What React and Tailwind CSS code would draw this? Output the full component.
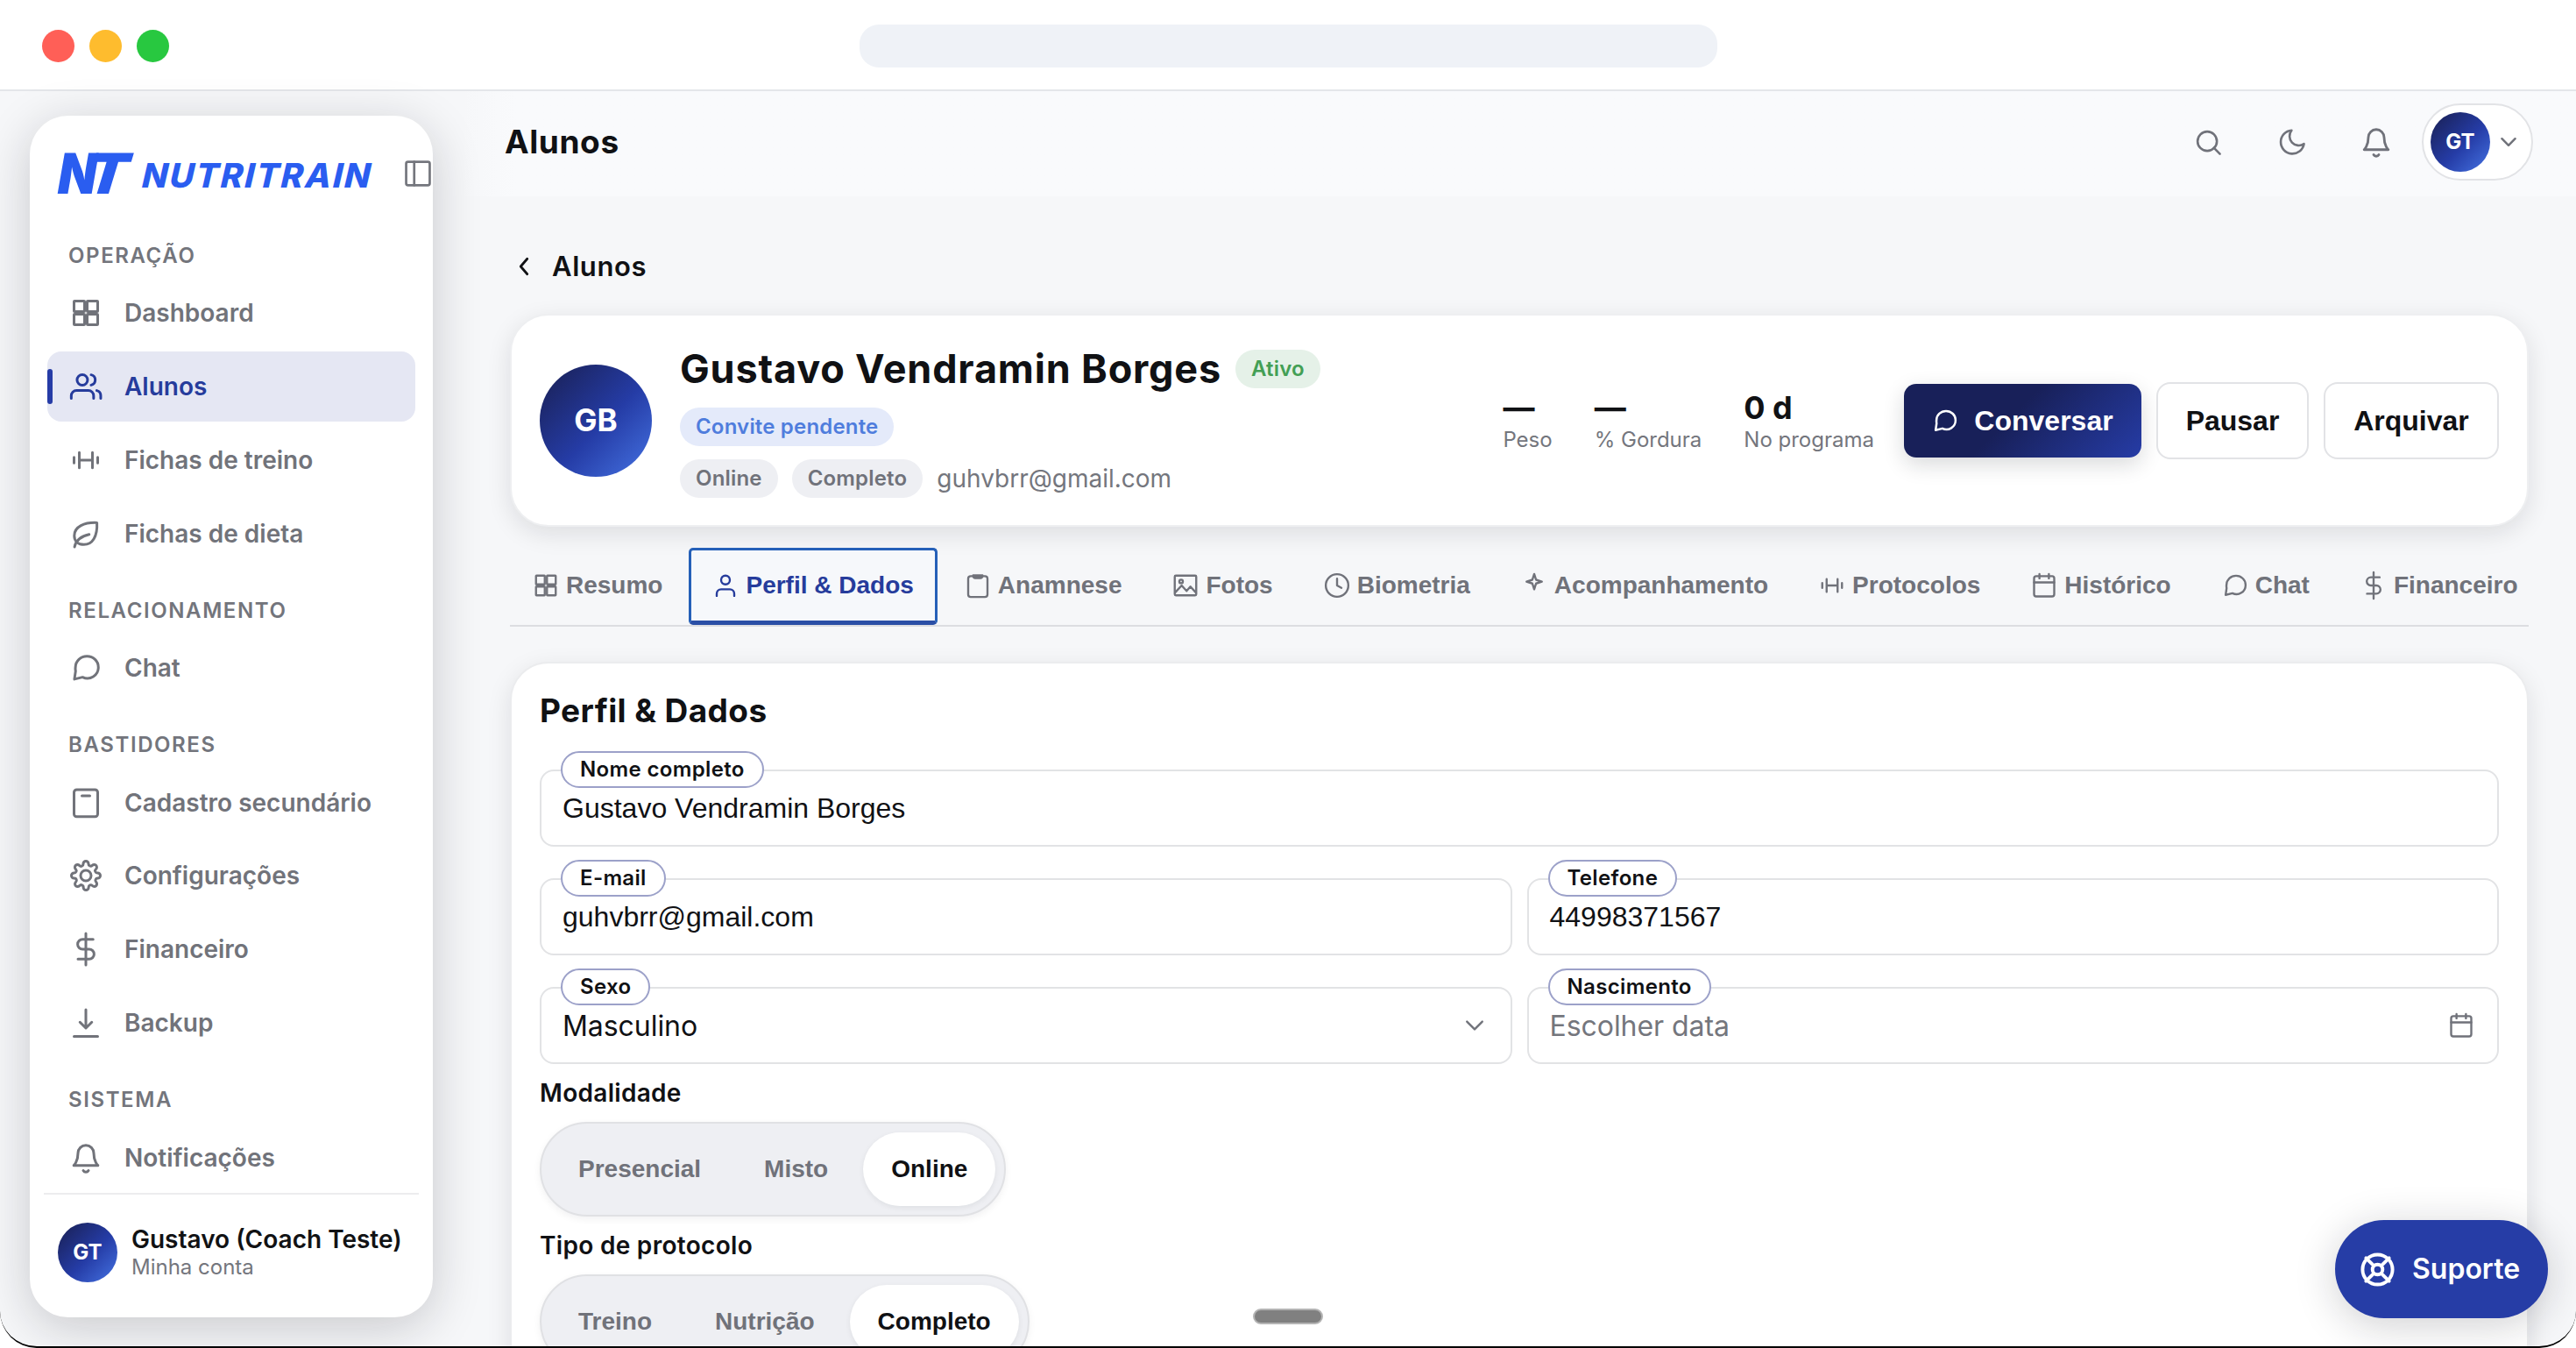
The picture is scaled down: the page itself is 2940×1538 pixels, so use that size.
import { clsx } from 'clsx'

const ICONS = {
  grid: (
    <>
      <rect x="3" y="3" width="8" height="8" rx=".4" />
      <rect x="13" y="3" width="8" height="8" rx=".4" />
      <rect x="3" y="13" width="8" height="8" rx=".4" />
      <rect x="13" y="13" width="8" height="8" rx=".4" />
    </>
  ),
  users: (
    <>
      <circle cx="9.3" cy="7" r="4" />
      <path d="M.9 21v-2a4 4 0 0 1 4-4h9a4 4 0 0 1 4 4v2M16 3.1a4 4 0 0 1 0 7.8M23.3 21v-2a4 4 0 0 0-3-3.9" />
    </>
  ),
  user: (
    <>
      <circle cx="12" cy="7" r="4" />
      <path d="M20 21.5v-2a4 4 0 0 0-4-4H8a4 4 0 0 0-4 4v2" />
    </>
  ),
  dumbbell: <path d="M3 9.8v4.4M7 6.2v11.6M17 6.2v11.6M21 9.8v4.4M7 12h10" />,
  leaf: (
    <>
      <path d="M20.4 3.6C11 3.2 3.2 6.5 3.2 13.5c0 4.5 3.3 6.7 7.3 6.7 6.5 0 10.5-6.2 9.9-16.6z" />
      <path d="M3.4 22c.8-4.5 4.6-8 11.1-9.5" />
    </>
  ),
  chat: <path d="M21.5 11.5a8.3 8.3 0 0 1-12 7.6L3.3 20.6l.9-6.2a8.7 8.7 0 0 1-.1-3A8.7 8.3 0 0 1 21.5 11.5z" />,
  tray: (
    <>
      <rect x="3" y="2" width="18" height="20.5" rx="2" />
      <path d="M9 6.6h6" />
    </>
  ),
  gear: (
    <>
      <circle cx="12" cy="12" r="4" />
      <path d="M19.4 15a1.65 1.65 0 0 0 .33 1.82l.06.06a2 2 0 1 1-2.83 2.83l-.06-.06a1.65 1.65 0 0 0-2.8 1.17V21a2 2 0 0 1-4 0v-.09A1.65 1.65 0 0 0 7.18 19.73l-.06.06a2 2 0 1 1-2.83-2.83l.06-.06A1.65 1.65 0 0 0 3.18 14H3a2 2 0 0 1 0-4h.09A1.65 1.65 0 0 0 4.27 7.18l-.06-.06a2 2 0 1 1 2.83-2.83l.06.06A1.65 1.65 0 0 0 10 3.18V3a2 2 0 0 1 4 0v.09a1.65 1.65 0 0 0 2.82 1.18l.06-.06a2 2 0 1 1 2.83 2.83l-.06.06A1.65 1.65 0 0 0 20.82 10H21a2 2 0 0 1 0 4h-.09a1.65 1.65 0 0 0-1.51 1z" />
    </>
  ),
  dollar: <path d="M12 0v24M17.5 4.5H9.5a3.75 3.75 0 0 0 0 7.5h5a3.75 3.75 0 0 1 0 7.5H6" />,
  download: <path d="M12 2v13.5M7.5 11.5l4.5 4.5 4.5-4.5M3 22.3h18" />,
  bell: (
    <>
      <path d="M6 8.5a6 6 0 0 1 12 0c0 6.5 3.2 9.3 3.2 9.3H2.8S6 15 6 8.5" />
      <path d="M10 21.7a2.3 2.3 0 0 0 4 0" />
    </>
  ),
  search: (
    <>
      <circle cx="11" cy="11" r="8" />
      <path d="M21.5 21.5l-5-5" />
    </>
  ),
  moon: <path d="M21.5 13.2A9.7 9.7 0 1 1 11.2 2a7.7 7.7 0 0 0 10.3 11.2z" />,
  chevronDown: <path d="M5 8.5l7 7 7-7" />,
  chevronLeft: <path d="M15 5l-6 7 6 7" />,
  panel: (
    <>
      <rect x="2.5" y="2.5" width="19" height="19" rx="1.5" />
      <path d="M9 2.5v19" />
    </>
  ),
  clipboard: (
    <>
      <path d="M16 3.5h2.5a2.3 2.3 0 0 1 2.3 2.3v14.4a2.3 2.3 0 0 1-2.3 2.3h-13a2.3 2.3 0 0 1-2.3-2.3V5.8a2.3 2.3 0 0 1 2.3-2.3H8" />
      <path d="M7.5 2.3h9v1.2a2 2 0 0 1-2 2h-5a2 2 0 0 1-2-2z" fill="currentColor" strokeWidth="1.2" />
    </>
  ),
  image: (
    <>
      <rect x="2.2" y="3" width="19.6" height="18" rx="1" />
      <circle cx="8" cy="8.3" r="1.6" />
      <path d="M2.5 18.5l6-6.5 4.5 5 3.5-4 5 5.5" />
    </>
  ),
  clock: (
    <>
      <circle cx="12" cy="12" r="10.3" />
      <path d="M12 5.8V12l4 2.2" />
    </>
  ),
  spark: <path d="M12 1.5l1.7 5.3L19 8.5l-5.3 1.7L12 15.5l-1.7-5.3L5 8.5l5.3-1.7z" />,
  calendar: (
    <>
      <rect x="2.8" y="3.5" width="18.4" height="18.5" rx="2" />
      <path d="M2.8 9.2h18.4M7.7 1.5v4M16.3 1.5v4" />
    </>
  ),
  buoy: (
    <>
      <circle cx="12" cy="12" r="10" />
      <circle cx="12" cy="12" r="3.4" />
      <path d="M4.3 4.3l5.2 5.2M19.7 4.3l-5.2 5.2M4.3 19.7l5.2-5.2M19.7 19.7l-5.2-5.2" />
    </>
  ),
}

function Icon({ name, className, stroke = 2 }) {
  return (
    <svg
      viewBox="0 0 24 24"
      fill="none"
      stroke="currentColor"
      strokeWidth={stroke}
      strokeLinecap="round"
      strokeLinejoin="round"
      className={clsx('shrink-0 overflow-visible', className)}
    >
      {ICONS[name]}
    </svg>
  )
}

const NAV = [
  {
    title: 'OPERAÇÃO',
    items: [
      { icon: 'grid', label: 'Dashboard' },
      { icon: 'users', label: 'Alunos', active: true },
      { icon: 'dumbbell', label: 'Fichas de treino' },
      { icon: 'leaf', label: 'Fichas de dieta' },
    ],
  },
  { title: 'RELACIONAMENTO', items: [{ icon: 'chat', label: 'Chat' }] },
  {
    title: 'BASTIDORES',
    items: [
      { icon: 'tray', label: 'Cadastro secundário' },
      { icon: 'gear', label: 'Configurações' },
      { icon: 'dollar', label: 'Financeiro' },
      { icon: 'download', label: 'Backup' },
    ],
  },
  { title: 'SISTEMA', items: [{ icon: 'bell', label: 'Notificações' }] },
]

const TABS = [
  { icon: 'grid', label: 'Resumo' },
  { icon: 'user', label: 'Perfil & Dados', active: true },
  { icon: 'clipboard', label: 'Anamnese' },
  { icon: 'image', label: 'Fotos' },
  { icon: 'clock', label: 'Biometria' },
  { icon: 'spark', label: 'Acompanhamento' },
  { icon: 'dumbbell', label: 'Protocolos' },
  { icon: 'calendar', label: 'Histórico' },
  { icon: 'chat', label: 'Chat' },
  { icon: 'dollar', label: 'Financeiro' },
]

const STATS = [
  { value: '—', label: 'Peso' },
  { value: '—', label: '% Gordura' },
  { value: '0 d', label: 'No programa' },
]

function Avatar({ initials, className }) {
  return (
    <div
      className={clsx(
        'flex shrink-0 items-center justify-center rounded-full bg-[linear-gradient(135deg,#1a2158_5%,#253ca6_55%,#4573e3_100%)] font-bold text-white',
        className,
      )}
    >
      {initials}
    </div>
  )
}

function Logo() {
  return (
    <div className="flex h-[44px] items-end text-[#2a5df0]">
      <div className="flex w-[92px] translate-y-[4px] items-end">
        <span className="-ml-[4px] origin-bottom-left -skew-x-[11deg] scale-x-[0.9] text-[64px] leading-[46px] font-black">N</span>
        <span className="-ml-[18px] origin-bottom-left -skew-x-[16deg] scale-x-[1.06] text-[64px] leading-[46px] font-black">T</span>
      </div>
      <span className="origin-bottom-left -skew-x-[13deg] text-[38.5px] leading-[34px] font-extrabold tracking-[2.1px]">
        NUTRITRAIN
      </span>
    </div>
  )
}

function Sidebar() {
  return (
    <aside className="mt-[28px] ml-[34px] flex h-[1371px] w-[460px] shrink-0 flex-col rounded-[44px] bg-white shadow-[0_12px_56px_rgba(20,22,30,0.2)]">
      <div className="flex h-[112px] items-start pt-[41px] pl-[33px]">
        <div className="w-[395px]">
          <Logo />
        </div>
        <Icon name="panel" className="mt-[8px] -ml-[2px] h-[34px] w-[34px] text-[#74767d]" stroke={1.9} />
      </div>

      <nav className="flex flex-col px-5">
        {NAV.map((group) => (
          <div key={group.title}>
            <div className="h-[73.5px] pt-[29px] pl-[24px] text-[24px] leading-[38px] font-semibold tracking-[1.6px] text-[#73757c]">
              {group.title}
            </div>
            <div className="flex flex-col gap-1">
              {group.items.map((item) => (
                <a
                  key={item.label}
                  className={clsx(
                    'relative flex h-[79.9px] items-center gap-[26px] rounded-2xl pl-[26px] text-[28px] font-semibold whitespace-nowrap',
                    item.active ? 'bg-[#e5e7f3] text-[#263c9c]' : 'text-[#71737a]',
                  )}
                >
                  {item.active && <span className="absolute top-5 left-0 h-10 w-[6px] rounded-full bg-[#263ca6]" />}
                  <Icon name={item.icon} className="h-9 w-9" />
                  {item.label}
                </a>
              ))}
            </div>
          </div>
        ))}
      </nav>

      <div className="mx-4 mt-auto flex h-[143px] items-start gap-[16px] border-t-2 border-[#ececee] pt-[32px] pl-4">
        <Avatar initials="GT" className="h-[68px] w-[68px] text-[24px]" />
        <div className="whitespace-nowrap">
          <div className="mt-[2px] text-[28px] leading-[34px] font-semibold text-[#111214]">Gustavo (Coach Teste)</div>
          <div className="text-[24px] leading-[29px] text-[#74767d]">Minha conta</div>
        </div>
      </div>
    </aside>
  )
}

function TopBar() {
  return (
    <header className="flex h-[120px] shrink-0 items-center bg-linear-to-r from-[#f9fafc]/0 to-[#f9fafc] to-[60px] pr-[49px] pb-1 pl-[48px]">
      <h1 className="text-[37px] font-bold tracking-[0.6px]">Alunos</h1>
      <div className="ml-auto flex items-center text-[#70727a]">
        <div className="mr-3 flex gap-4">
          {['search', 'moon', 'bell'].map((name) => (
            <button key={name} className="flex h-20 w-20 items-center justify-center">
              <Icon name={name} className={name === 'bell' ? 'h-9 w-9' : 'h-[33px] w-[33px]'} stroke={1.9} />
            </button>
          ))}
        </div>
        <button className="flex h-[88px] w-[127px] items-center gap-[8px] rounded-full border-2 border-[#e2e3e6] bg-white pl-2">
          <Avatar initials="GT" className="h-[68px] w-[68px] text-[24px]" />
          <Icon name="chevronDown" className="h-[26px] w-[26px]" stroke={2.3} />
        </button>
      </div>
    </header>
  )
}

function Badge({ children, className }) {
  return (
    <span
      className={clsx(
        'flex h-[44px] items-center rounded-full px-[18px] text-[24px] font-semibold tracking-[0.18px] whitespace-nowrap',
        className,
      )}
    >
      {children}
    </span>
  )
}

function StudentCard() {
  return (
    <section className="flex h-[243px] items-center rounded-[44px] border-2 border-[#eeeff1] bg-white px-8 shadow-[0_8px_28px_rgba(20,22,30,0.11)]">
      <Avatar initials="GB" className="h-[128px] w-[128px] text-[35px]" />
      <div className="ml-[32px] flex flex-col pt-[3px]">
        <div className="flex h-[52px] items-center gap-[16px]">
          <h2 className="text-[45px] leading-[52px] font-bold tracking-[0.82px] whitespace-nowrap">Gustavo Vendramin Borges</h2>
          <Badge className="bg-[#e5f1e8] text-[#439f55]">Ativo</Badge>
        </div>
        <div className="mt-[18px] flex">
          <Badge className="bg-[#e4eafa] text-[#4f7ddd]">Convite pendente</Badge>
        </div>
        <div className="mt-[15px] flex items-center">
          <Badge className="bg-[#eeeff3] text-[#70727a]">Online</Badge>
          <Badge className="ml-4 bg-[#eeeff3] text-[#70727a]">Completo</Badge>
          <span className="ml-4 text-[28px] text-[#74767d]">guhvbrr@gmail.com</span>
        </div>
      </div>

      <div className="ml-auto flex items-center">
        <div className="mr-[34px] flex gap-12 pt-[3px]">
          {STATS.map((stat) => (
            <div key={stat.label} className="whitespace-nowrap">
              <div className="text-[36px] leading-[42px] font-bold">{stat.value}</div>
              <div className="text-[24px] leading-[32px] text-[#74767d]">{stat.label}</div>
            </div>
          ))}
        </div>
        <div className="flex items-center gap-[17px] font-['Liberation_Sans',sans-serif] text-[32px] font-bold">
          <button className="flex h-[84px] w-[271px] items-center justify-center gap-[18px] rounded-[14px] bg-[linear-gradient(135deg,#182059_45%,#263ca6_100%)] text-white shadow-[0_8px_24px_rgba(20,22,30,0.16)]">
            <Icon name="chat" className="h-[30px] w-[30px]" />
            Conversar
          </button>
          <button className="h-[88px] w-[174px] rounded-[16px] border-2 border-[#e2e3e6] bg-white">Pausar</button>
          <button className="h-[88px] w-[200px] rounded-[16px] border-2 border-[#e2e3e6] bg-white">Arquivar</button>
        </div>
      </div>
    </section>
  )
}

function Tabs() {
  return (
    <div className="mt-6 flex h-[90px] gap-[6px] border-b-2 border-[#dcdde1] font-['Liberation_Sans',sans-serif] text-[28px] font-bold">
      {TABS.map((tab) => (
        <button
          key={tab.label}
          className={clsx(
            'flex items-center gap-[8px] rounded-[5px] whitespace-nowrap',
            tab.active
              ? '-mr-px -ml-[2px] border-[3.5px] border-b-[5px] border-[#2560b8] border-b-[#2a4fa6] bg-[#f6f8fb] px-[24px] text-[#263c9c]'
              : 'px-[26px] pb-[3px] text-[#70727a]',
          )}
        >
          <Icon name={tab.icon} className="h-[30px] w-[30px]" stroke={1.9} />
          {tab.label}
        </button>
      ))}
    </div>
  )
}

function Field({ label, value, placeholder, icon, sans, className }) {
  return (
    <div className={clsx('relative flex h-[88px] items-center rounded-[16px] border-2 border-[#e2e3e5] px-[24px]', className)}>
      <span className="absolute -top-[23px] left-[22px] flex h-[42px] items-center rounded-full border-2 border-[#9ca1c9] bg-white px-[20px] text-[24px] font-semibold tracking-[0.35px] whitespace-nowrap">
        {label}
      </span>
      <span
        className={clsx(
          'text-[32px]',
          sans ? 'pt-px tracking-[-0.05px]' : "font-['Liberation_Sans',sans-serif]",
          placeholder && 'text-[#74767d]',
        )}
      >
        {value || placeholder}
      </span>
      {icon && <Icon name={icon} className="mr-[2px] ml-auto h-[30px] w-[30px] text-[#70727a]" stroke={1.9} />}
    </div>
  )
}

function Segmented({ label, options, selected }) {
  return (
    <div className="mt-3">
      <div className="text-[28px] leading-[42px] font-semibold tracking-[0.3px]">{label}</div>
      <div className="mt-3 inline-flex h-[108px] gap-2 rounded-full border-2 border-[#e0e1e4] bg-[#eeeff3] p-[10px] align-top font-['Liberation_Sans',sans-serif] text-[28px] font-bold shadow-[0_3px_8px_rgba(20,22,30,0.06)]">
        {options.map((option) => (
          <button
            key={option}
            className={clsx(
              'h-[84px] rounded-full px-8',
              option === selected ? 'bg-white text-[#101114] shadow-[0_2px_6px_rgba(20,22,30,0.07)]' : 'text-[#70727a]',
            )}
          >
            {option}
          </button>
        ))}
      </div>
    </div>
  )
}

function ProfileForm() {
  return (
    <section className="mt-[40px] h-[900px] rounded-[44px] border-2 border-[#ebecee] bg-white px-8 pt-8 shadow-[0_8px_28px_rgba(20,22,30,0.1)]">
      <h3 className="text-[37px] leading-[44px] font-bold tracking-[0.4px]">Perfil &amp; Dados</h3>
      <div className="mt-[45px] grid grid-cols-2 gap-x-[17px] gap-y-9">
        <Field label="Nome completo" value="Gustavo Vendramin Borges" className="col-span-2" />
        <Field label="E-mail" value="guhvbrr@gmail.com" />
        <Field label="Telefone" value="44998371567" />
        <Field label="Sexo" value="Masculino" icon="chevronDown" sans />
        <Field label="Nascimento" placeholder="Escolher data" icon="calendar" sans />
      </div>
      <Segmented label="Modalidade" options={['Presencial', 'Misto', 'Online']} selected="Online" />
      <Segmented label="Tipo de protocolo" options={['Treino', 'Nutrição', 'Completo']} selected="Completo" />
    </section>
  )
}

export default function App() {
  return (
    <div className="h-[1538px] w-[2940px] overflow-hidden bg-white font-['Inter',sans-serif] text-[#101114]">
      <div className="relative flex h-full flex-col overflow-hidden rounded-b-[42px] border-b-2 border-black bg-[#f6f7f9]">
        <div className="flex h-[104px] shrink-0 items-center border-b-2 border-[#e4e6ea] bg-white pt-[2px] pl-[48px]">
          <div className="flex w-[933px] gap-[17px]">
            <span className="h-[37px] w-[37px] rounded-full bg-[#ff5f57]" />
            <span className="h-[37px] w-[37px] rounded-full bg-[#febc2e]" />
            <span className="h-[37px] w-[37px] rounded-full bg-[#28c840]" />
          </div>
          <div className="h-[49px] w-[979px] rounded-[22px] bg-[#eff2f7]" />
        </div>

        <div className="flex min-h-0 flex-1">
          <Sidebar />
          <main className="ml-[34px] flex min-w-0 flex-1 flex-col">
            <TopBar />
            <div className="px-[54px]">
              <a className="flex h-[134px] items-center gap-[17px] pt-[26px] pl-[1px] text-[31px] font-semibold tracking-[0.6px]">
                <Icon name="chevronLeft" className="h-[30px] w-[30px]" stroke={2.2} />
                Alunos
              </a>
              <StudentCard />
              <Tabs />
              <ProfileForm />
            </div>
          </main>
        </div>

        <div className="absolute top-[1493px] left-[1430px] h-[18px] w-[80px] rounded-full border-2 border-[#b4b4b4] bg-[#808080]" />
        <button className="absolute top-[1392px] left-[2665px] flex h-[112px] w-[243px] items-center gap-[19px] rounded-full bg-[#263da6] pl-[28px] text-[32px] font-semibold text-white shadow-[0_8px_48px_rgba(20,22,30,0.2)]">
          <Icon name="buoy" className="h-[41px] w-[41px]" stroke={2.3} />
          Suporte
        </button>
      </div>
    </div>
  )
}
